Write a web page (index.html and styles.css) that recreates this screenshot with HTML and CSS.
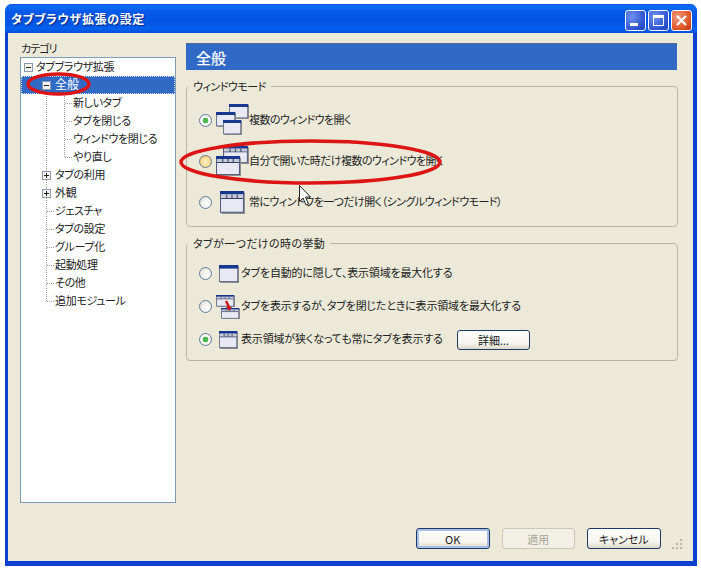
FILE: index.html
```html
<!DOCTYPE html>
<html lang="ja">
<head>
<meta charset="utf-8">
<title>タブブラウザ拡張の設定</title>
<link rel="stylesheet" href="styles.css">
</head>
<body>
<svg class="defs" width="0" height="0" aria-hidden="true">
  <symbol id="win" viewBox="0 0 24 20" preserveAspectRatio="none">
    <rect x="1.5" y="1.5" width="22.5" height="18.5" fill="#8f8f8f"/>
    <rect x=".5" y=".5" width="22" height="18" fill="#e9e9f3" stroke="#55607e"/>
    <rect x="0" y="0" width="23" height="4" fill="#16388e"/>
  </symbol>
  <symbol id="wint" viewBox="0 0 24 20" preserveAspectRatio="none">
    <rect x="1.5" y="1.5" width="22.5" height="18.5" fill="#8f8f8f"/>
    <rect x=".5" y=".5" width="22" height="18" fill="#e9e9f3" stroke="#55607e"/>
    <rect x="0" y="0" width="23" height="3" fill="#16388e"/>
    <rect x="1" y="3" width="21" height="3" fill="#c9cbd6"/>
    <path d="M6.5 3v3M11.5 3v3M16.5 3v3M1 6.5h21" stroke="#333f66" fill="none"/>
  </symbol>
</svg>
<div class="window">
  <header class="titlebar">
    <h1 class="title">タブブラウザ拡張の設定</h1>
    <div class="caption">
      <span class="cap cap-min"><svg width="21" height="21" viewBox="0 0 21 21"><rect x="5" y="13" width="8" height="3" fill="#fff"/></svg></span>
      <span class="cap cap-max"><svg width="21" height="21" viewBox="0 0 21 21"><rect x="5.5" y="6.5" width="10" height="9" fill="none" stroke="#fff"/><rect x="5" y="5" width="11" height="3" fill="#fff"/></svg></span>
      <span class="cap cap-close"><svg width="21" height="21" viewBox="0 0 21 21"><path d="M6 6l9 9M15 6l-9 9" stroke="#fff" stroke-width="2.2" fill="none"/></svg></span>
    </div>
  </header>
  <div class="client">
    <div class="main">
      <aside class="side">
        <div class="side-label">カテゴリ</div>
        <ul class="tree">
          <li class="row"><span class="exp root minus"></span><span class="lbl">タブブラウザ拡張</span></li>
          <li class="row sel"><span class="ind"></span><span class="cell"><span class="exp minus"></span></span><span class="lbl">全般</span></li>
          <li class="row"><span class="ind"></span><span class="cell v"></span><span class="cell t"></span><span class="lbl">新しいタブ</span></li>
          <li class="row"><span class="ind"></span><span class="cell v"></span><span class="cell t"></span><span class="lbl">タブを閉じる</span></li>
          <li class="row"><span class="ind"></span><span class="cell v"></span><span class="cell t"></span><span class="lbl">ウィンドウを閉じる</span></li>
          <li class="row"><span class="ind"></span><span class="cell v"></span><span class="cell e"></span><span class="lbl">やり直し</span></li>
          <li class="row"><span class="ind"></span><span class="cell v"><span class="exp plus"></span></span><span class="lbl">タブの利用</span></li>
          <li class="row"><span class="ind"></span><span class="cell v"><span class="exp plus"></span></span><span class="lbl">外観</span></li>
          <li class="row"><span class="ind"></span><span class="cell t"></span><span class="lbl">ジェスチャ</span></li>
          <li class="row"><span class="ind"></span><span class="cell t"></span><span class="lbl">タブの設定</span></li>
          <li class="row"><span class="ind"></span><span class="cell t"></span><span class="lbl">グループ化</span></li>
          <li class="row"><span class="ind"></span><span class="cell t"></span><span class="lbl">起動処理</span></li>
          <li class="row"><span class="ind"></span><span class="cell t"></span><span class="lbl">その他</span></li>
          <li class="row"><span class="ind"></span><span class="cell e"></span><span class="lbl">追加モジュール</span></li>
        </ul>
      </aside>
      <section class="panel">
        <h2 class="panel-head">全般</h2>
        <fieldset class="group g1">
          <legend>ウィンドウモード</legend>
          <div class="opt">
            <span class="radio on"></span>
            <svg class="ico32" width="33" height="34" viewBox="0 0 33 34"><use href="#win" x="13" y="0" width="20" height="15"/><use href="#win" x="0" y="8" width="20" height="15"/><use href="#win" x="7" y="16" width="19" height="15"/></svg>
            <span class="txt">複数のウィンドウを開く</span>
          </div>
          <div class="opt">
            <span class="radio hot"></span>
            <svg class="ico32" width="33" height="34" viewBox="0 0 33 34"><use href="#wint" x="7" y="1" width="26" height="18"/><use href="#wint" x="0" y="11" width="25" height="20"/></svg>
            <span class="txt">自分で開いた時だけ複数のウィンドウを開く</span>
          </div>
          <div class="opt">
            <span class="radio"></span>
            <svg class="ico32" width="33" height="34" viewBox="0 0 33 34"><use href="#wint" x="4" y="5" width="25" height="23"/></svg>
            <span class="txt">常にウィンドウを一つだけ開く（シングルウィンドウモード）</span>
          </div>
        </fieldset>
        <fieldset class="group g2">
          <legend>タブが一つだけの時の挙動</legend>
          <div class="opt">
            <span class="radio"></span>
            <svg class="ico24" width="24" height="24" viewBox="0 0 24 24"><use href="#win" x="3" y="3" width="20" height="18"/></svg>
            <span class="txt">タブを自動的に隠して、表示領域を最大化する</span>
          </div>
          <div class="opt">
            <span class="radio"></span>
            <svg class="ico24" width="24" height="24" viewBox="0 0 24 24"><use href="#wint" x="0" y="0" width="19" height="12"/><use href="#wint" x="5" y="13" width="19" height="11"/><path d="M10 6l3 6" stroke="#c81010" stroke-width="2.4" fill="none"/><path d="M10 12h6l-3 4z" fill="#c81010"/></svg>
            <span class="txt">タブを表示するが、タブを閉じたときに表示領域を最大化する</span>
          </div>
          <div class="opt">
            <span class="radio on"></span>
            <svg class="ico24" width="24" height="24" viewBox="0 0 24 24"><use href="#wint" x="3" y="3" width="19" height="18"/></svg>
            <span class="txt">表示領域が狭くなっても常にタブを表示する</span>
            <button class="btn btn-detail" type="button">詳細...</button>
          </div>
        </fieldset>
      </section>
    </div>
    <footer class="actions">
      <button class="btn btn-default" type="button">OK</button>
      <button class="btn" type="button" disabled>適用</button>
      <button class="btn" type="button">キャンセル</button>
    </footer>
    <svg class="grip" width="12" height="12" viewBox="0 0 12 12"><path d="M9 1h2v2H9zM5 5h2v2H5zM9 5h2v2H9zM1 9h2v2H1zM5 9h2v2H5zM9 9h2v2H9z" fill="#b8b5a4"/></svg>
  </div>
</div>
<svg class="marks" width="701" height="571" viewBox="0 0 701 571" aria-hidden="true">
  <ellipse cx="58.5" cy="84" rx="30.5" ry="10" fill="none" stroke="#dc1414" stroke-width="3.5"/>
  <ellipse cx="310.5" cy="162" rx="129.5" ry="21" fill="none" stroke="#dc1414" stroke-width="3.5"/>
  <path d="M299.5 185.5v16l3.5-3.5 3 7 2.5-1-3-7h5z" fill="#fff" stroke="#222"/>
</svg>
</body>
</html>
```
FILE: styles.css
```css
* { box-sizing: border-box; }
html, body { margin: 0; padding: 0; }
body {
  width: 701px;
  height: 571px;
  overflow: hidden;
  background: #fff;
  padding: 4px 0 0 5px;
  position: relative;
  font: 11px/14px "Noto Sans CJK JP", sans-serif;
  font-feature-settings: "palt";
  color: #222;
}
.defs { position: absolute; }
.window {
  width: 692px;
  height: 562px;
  display: flex;
  flex-direction: column;
  border-radius: 7px 7px 0 0;
  background: #0a3fd0;
  overflow: hidden;
}
.titlebar {
  height: 29px;
  flex: none;
  display: flex;
  align-items: center;
  justify-content: space-between;
  padding: 0 5px 0 6px;
  background: linear-gradient(#0a5ae6 0, #0f6cf5 3px, #0558e8 8px, #0355e4 18px, #0460ee 25px, #0450d4 29px);
}
.title {
  margin: 0;
  font-size: 12px;
  font-weight: 700;
  line-height: 14px;
  color: #fff;
  letter-spacing: .6px;
  text-shadow: 1px 1px 1px #0a2a80;
}
.caption { display: flex; gap: 2px; margin-top: 3px; }
.cap {
  width: 21px;
  height: 21px;
  display: block;
  border: 1px solid #fff;
  border-radius: 3px;
  background: radial-gradient(circle at 30% 30%, #6f92ee, #2c52cf 70%, #2546c0);
}
.cap svg { display: block; margin: -1px; }
.cap-close { background: radial-gradient(circle at 30% 30%, #ee9a7c, #df5a2c 60%, #bb3010); }
.client {
  flex: 1;
  position: relative;
  margin: 0 4px 5px 3px;
  padding: 10px 15px 0 12px;
  background: #ece9d8;
}
.main { display: flex; gap: 10px; height: 460px; }
.side { width: 156px; display: flex; flex-direction: column; }
.side-label { height: 14px; padding-left: 1px; line-height: 11px; letter-spacing: -1px; }
.tree {
  flex: 1;
  list-style: none;
  margin: 0;
  padding: 0;
  background: #fff;
  border: 1px solid #7f9db9;
}
.row { display: flex; align-items: center; height: 18px; }
.row.sel { background: #316ac5; color: #fff; outline: 1px dotted #cfe0ff; outline-offset: -1px; }
.lbl { white-space: nowrap; letter-spacing: -.35px; margin-bottom: 2px; }
.sel .lbl { font-size: 12px; letter-spacing: 0; }
.ind { width: 16px; flex: none; }
.cell {
  width: 18px;
  height: 18px;
  flex: none;
  display: flex;
  align-items: center;
  justify-content: center;
}
.cell.v, .cell.t, .cell.e {
  background-image: repeating-linear-gradient(#a0a0a0 0 1px, transparent 1px 2px);
  background-size: 1px 100%;
  background-position: 9px 0;
  background-repeat: no-repeat;
}
.cell.t, .cell.e {
  background-image:
    repeating-linear-gradient(#a0a0a0 0 1px, transparent 1px 2px),
    repeating-linear-gradient(90deg, #a0a0a0 0 1px, transparent 1px 2px);
  background-size: 1px 100%, 8px 1px;
  background-position: 9px 0, 10px 9px;
}
.cell.e { background-size: 1px 9px, 8px 1px; }
.exp {
  display: block;
  width: 9px;
  height: 9px;
  flex: none;
  border: 1px solid #8a98b2;
  background-color: #f4f4ee;
  background-image: linear-gradient(#222, #222);
  background-size: 5px 1px;
  background-position: center;
  background-repeat: no-repeat;
}
.exp.plus {
  background-image: linear-gradient(#222, #222), linear-gradient(#222, #222);
  background-size: 5px 1px, 1px 5px;
}
.exp.root { margin: 0 3px 0 3px; }
.panel { flex: 1; display: flex; flex-direction: column; gap: 9px; }
.panel-head {
  margin: 0;
  width: 491px;
  height: 27px;
  padding-left: 10px;
  font-size: 15px;
  font-weight: 500;
  line-height: 27px;
  color: #fff;
  background: #3169c6;
  border-top: 1px solid #54668c;
}
.group {
  margin: 0;
  min-width: 0;
  border: 1px solid #b9b6a6;
  border-radius: 4px;
}
.group legend { margin-left: -11px; padding: 0 5px; line-height: 14px; }
.g1 legend { letter-spacing: -.5px; }
.g2 legend { letter-spacing: .4px; }
.g1 { height: 148px; padding: 7px 0 0 12px; letter-spacing: -.55px; }
.g2 { height: 125px; padding: 7px 0 0 12px; letter-spacing: -.17px; }
.opt { display: flex; align-items: center; white-space: nowrap; }
.g1 .opt { height: 41px; }
.g2 .opt { height: 33px; }
.txt { margin-bottom: 3px; }
.ico32 { margin: 0 0 0 4px; flex: none; }
.ico24 { margin: 0 1px 0 4px; flex: none; }
.radio {
  width: 13px;
  height: 13px;
  flex: none;
  border: 1px solid #5f7d9c;
  border-radius: 50%;
  background: radial-gradient(circle at 65% 65%, #fff 0, #f4f4ee 40%, #d8d8ce 100%);
}
.radio.on { background: radial-gradient(circle, #4cb84c 0 2.6px, #fff 3.2px, #e4e4da 100%); }
.radio.hot { background: radial-gradient(circle at 50% 55%, #fff0c8 0, #fbd98a 60%, #e8a840 100%); }
.btn {
  width: 73.5px;
  height: 21px;
  padding: 0;
  font: inherit;
  font-feature-settings: "palt";
  color: #222;
  border: 1px solid #1f3a64;
  border-radius: 3px;
  background: linear-gradient(#fff, #f4f3ec 70%, #dcd8c8);
}
.btn-default { box-shadow: inset 0 0 0 2px #a8c0e8; }
.btn:disabled { color: #a9a697; border-color: #cac7b8; background: #f2f0e6; }
.btn-detail { margin-left: 14px; height: 20px; }
.actions { display: flex; gap: 12px; padding: 25px 0 0 408px; margin-left: -12px; }
.grip { position: absolute; right: 10px; bottom: 11px; }
.marks { position: absolute; left: 0; top: 0; pointer-events: none; }
```
